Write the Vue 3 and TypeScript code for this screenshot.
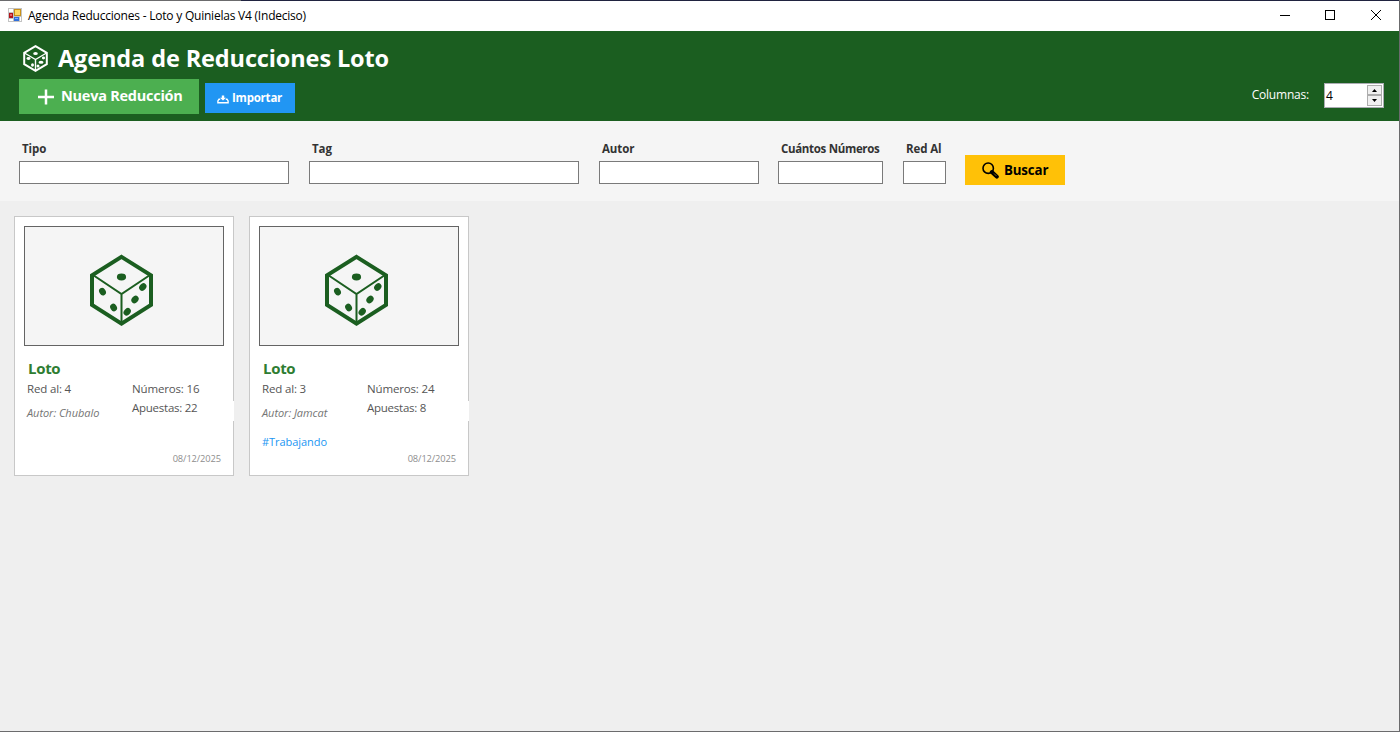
<script setup lang="ts">
import { ref } from 'vue'

interface Reduction {
  type: string
  redAl: number
  numbers: number
  bets: number
  author: string
  tag: string
  date: string
}

interface Field {
  key: string
  label: string
}

const columns = ref(4)
const fields: Field[] = [
  { key: 'tipo', label: 'Tipo' },
  { key: 'etiqueta', label: 'Tag' },
  { key: 'autor', label: 'Autor' },
  { key: 'numeros', label: 'Cuántos Números' },
  { key: 'redal', label: 'Red Al' },
]
const reductions: Reduction[] = [
  { type: 'Loto', redAl: 4, numbers: 16, bets: 22, author: 'Chubalo', tag: '', date: '08/12/2025' },
  { type: 'Loto', redAl: 3, numbers: 24, bets: 8, author: 'Jamcat', tag: '#Trabajando', date: '08/12/2025' },
]
</script>

<template>
  <div class="window">
    <div class="top-edge"></div>
    <div class="titlebar">
      <svg class="app-icon" viewBox="0 0 14 14" shape-rendering="crispEdges">
        <rect width="14" height="14" fill="#c3c3c3" />
        <path d="M1 1h4v3H1zM1 11h4v2H1z" fill="#fff" />
        <rect x="1" y="5" width="4" height="5" fill="#b3141b" />
        <rect x="2" y="6" width="2" height="2" fill="#e8656a" />
        <rect x="6" y="1" width="7" height="7" fill="#c9911a" />
        <rect x="7" y="2" width="5" height="5" fill="#ffd862" />
        <rect x="6" y="9" width="5" height="4" fill="#2f6fdc" />
        <rect x="7" y="10" width="3" height="1" fill="#7fb0ff" />
        <rect x="12" y="9" width="1" height="4" fill="#fff" />
      </svg>
      <span class="caption">Agenda Reducciones - Loto y Quinielas V4 (Indeciso)</span>
      <svg class="controls" viewBox="0 0 102 10" shape-rendering="crispEdges">
        <path d="M0 5.500h10" stroke="#000" />
        <rect x="45.500" y=".5" width="9" height="9" fill="none" stroke="#000" />
        <path d="M91 0l10 10M101 0L91 10" stroke="#000" shape-rendering="auto" />
      </svg>
    </div>

    <header class="header">
      <div class="brand">
        <svg class="brand-die" viewBox="0 0 25 27" fill="none" stroke="#fff">
          <path d="M12.500 1.200 23.800 7.800V19.200L12.500 25.800 1.200 19.200V7.800Z" stroke-width="2" />
          <path d="M1.500 8 12.500 14.500 23.500 8M12.500 14.500V25.500" stroke-width="1.400" />
          <g fill="#fff" stroke="none">
            <ellipse cx="12.500" cy="8.500" rx="2.300" ry="1.600" />
            <ellipse cx="5.500" cy="13.500" rx="2" ry="1.400" />
            <ellipse cx="9.500" cy="20" rx="1.500" ry="1.700" />
            <ellipse cx="20.500" cy="13" rx="1.600" ry="1.400" />
            <ellipse cx="18" cy="17.200" rx="2.500" ry="1.500" />
            <ellipse cx="15" cy="21" rx="1.500" ry="1.500" />
          </g>
        </svg>
        <h1>Agenda de Reducciones Loto</h1>
      </div>
      <div class="toolbar">
        <button class="btn new">
          <svg class="plus" viewBox="0 0 16 16"><path d="M8 .5v15M0 8h16" stroke="#fff" stroke-width="2.500" /></svg>
          <span class="new-text">Nueva Reducción</span>
        </button>
        <button class="btn import">
          <svg class="import-icon" viewBox="0 0 12 9" fill="none" stroke="#fff">
            <path d="M3.200 4.200H2L.9 6V7.800H11.100V6L10 4.200H8.800" stroke-width="1.400" />
            <path d="M4.800 .5H7.200V2.800H9L6 5.600 3 2.800H4.800Z" fill="#fff" stroke="none" />
          </svg>
          <span class="import-text">Importar</span>
        </button>
        <div class="columns">
          <span class="columns-label">Columnas:</span>
          <div class="spinner">
            <span class="spinner-value">{{ columns }}</span>
            <div class="arrows">
              <button @click="columns++"><svg viewBox="0 0 5 3"><path d="M0 3h5L2.500 0z" /></svg></button>
              <button @click="columns--"><svg viewBox="0 0 5 3"><path d="M0 0h5L2.500 3z" /></svg></button>
            </div>
          </div>
        </div>
      </div>
    </header>

    <section class="filters">
      <label v-for="f in fields" :key="f.key" class="field" :class="f.key">
        <span class="field-label">{{ f.label }}</span>
        <input type="text" />
      </label>
      <button class="btn search">
        <svg class="lens" viewBox="0 0 17 17" fill="none" stroke="#000">
          <circle cx="6.200" cy="6.200" r="5.200" stroke-width="1.600" />
          <path d="M9.800 10 14.800 14.600" stroke-width="4" stroke-linecap="round" />
          <path d="M12 11.500 14.500 14" stroke="#ffc107" stroke-width=".5" />
        </svg>
        <span class="search-text">Buscar</span>
      </button>
    </section>

    <main class="grid">
      <article v-for="r in reductions" :key="r.author" class="card">
        <div class="picture">
          <svg class="die" viewBox="0 0 64 72" fill="none" stroke="#1b5e20">
            <path d="M31.500 2.900 61 21.400V50.900L31.500 69.600 2 50.900V21.400Z" stroke-width="4" />
            <path d="M3 21 31.500 40 60 21M31.500 40V69" stroke-width="2" />
            <g fill="#1b5e20" stroke="none">
              <ellipse cx="31.500" cy="23" rx="4.600" ry="3.400" />
              <ellipse cx="12.500" cy="37.600" rx="3.200" ry="3.900" transform="rotate(-32 12.500 37.600)" />
              <ellipse cx="23.600" cy="53.500" rx="3.200" ry="3.900" transform="rotate(-32 23.600 53.500)" />
              <ellipse cx="52.800" cy="33" rx="3.200" ry="4.100" transform="rotate(42 52.800 33)" />
              <ellipse cx="45" cy="45.500" rx="3.200" ry="4.100" transform="rotate(42 45 45.500)" />
              <ellipse cx="37.200" cy="57.800" rx="3.200" ry="4.100" transform="rotate(42 37.200 57.800)" />
            </g>
          </svg>
        </div>
        <h2>{{ r.type }}</h2>
        <div class="details">
          <div class="left">
            <span class="red-al">Red al: {{ r.redAl }}</span>
            <span class="author">Autor: {{ r.author }}</span>
          </div>
          <div class="right">
            <span class="numbers">Números: {{ r.numbers }}</span>
            <span class="bets">Apuestas: {{ r.bets }}</span>
          </div>
        </div>
        <div class="hashtag">{{ r.tag }}</div>
        <time>{{ r.date }}</time>
      </article>
    </main>
  </div>
</template>

<style>
body {
  margin: 0;
  overflow: hidden;
}
</style>

<style scoped>
.window {
  box-sizing: border-box;
  width: 1400px;
  height: 732px;
  display: flex;
  flex-direction: column;
  border-right: 1px solid #6b6b6d;
  border-bottom: 1px solid #6b6b6d;
  background: #efefef;
  font-family: "Open Sans", "Noto Sans", sans-serif;
  font-size: 12px;
  white-space: nowrap;
}
.window * { box-sizing: border-box; }
svg { display: block; flex: none; }
button { font-family: inherit; border: 0; padding: 0; margin: 0; }
.top-edge { height: 1px; flex: none; background: linear-gradient(to right, #6b6b6d 241px, #202340 241px); }
.titlebar {
  height: 30px;
  flex: none;
  display: flex;
  align-items: center;
  padding: 0 18px 0 8px;
  background: #fff;
}
.app-icon { width: 14px; height: 14px; margin-bottom: 2px; }
.caption { margin-left: 6px; line-height: 20px; color: #000; letter-spacing: -0.22px; }
.controls { width: 102px; height: 10px; margin-left: auto; margin-right: -1px; margin-bottom: 2px; }
.header {
  height: 90px;
  flex: none;
  background: #1b5e20;
  color: #fff;
}
.brand { height: 48px; display: flex; padding: 14px 0 0 23px; }
.brand-die { width: 25px; height: 27px; }
h1 { margin: -3px 0 0 10px; font-size: 23.500px; line-height: 32px; font-weight: 700; letter-spacing: -0.12px; }
.toolbar { display: flex; padding-left: 19px; }
.btn { display: flex; align-items: center; font-weight: 700; color: #fff; }
.new { width: 180px; height: 35px; background: #4caf50; padding-left: 19px; font-size: 14.500px; letter-spacing: -0.25px; }
.new-text, .import-text { margin-bottom: 2px; }
.plus { width: 16px; height: 16px; margin-right: 7px; }
.import { width: 90px; height: 30px; margin: 4px 0 0 6px; background: #2196f3; padding-left: 12px; font-size: 11.500px; letter-spacing: -0.22px; }
.import-text { margin-bottom: 1px; }
.import-icon { width: 12px; height: 9px; margin: 2px 3px 0 0; }
.columns { display: flex; margin: 4px 15px 0 auto; }
.columns-label { line-height: 24px; margin-right: 15px; letter-spacing: -0.2px; }
.spinner {
  width: 60px;
  height: 25px;
  display: flex;
  justify-content: space-between;
  padding: 1px;
  border: 1px solid #abadb3;
  background: #fff;
  color: #000;
}
.spinner-value { line-height: 21px; }
.arrows { width: 15px; display: flex; flex-direction: column; }
.arrows button {
  height: 10px;
  display: flex;
  align-items: center;
  justify-content: center;
  background: #f0f0f0;
  border: 1px solid #adadad;
}
.arrows button + button { height: 11px; }
.arrows svg { width: 5px; height: 3px; }
.filters { height: 80px; flex: none; display: flex; padding-left: 19px; background: #f5f5f5; }
.field { display: flex; flex-direction: column; margin-right: 20px; padding-top: 18px; }
.field-label { height: 22px; line-height: 20px; padding-left: 3px; font-size: 11.500px; font-weight: 700; color: #333; letter-spacing: -0.1px; }
.field input { width: 100%; height: 23px; border: 1px solid #7a7a7a; background: #fff; padding: 0 3px; outline: 0; }
.tipo, .etiqueta { width: 270px; }
.autor { width: 160px; margin-right: 19px; }
.numeros { width: 105px; }
.numeros .field-label { letter-spacing: -0.32px; }
.redal { width: 43px; margin-right: 19px; }
.search { width: 100px; height: 30px; margin-top: 34px; padding-left: 17px; background: #ffc107; color: #000; font-size: 13.300px; letter-spacing: -0.15px; }
.lens { width: 17px; height: 17px; margin-right: 5px; }
.grid { display: flex; gap: 15px; padding: 15px 14px; }
.card {
  width: 220px;
  height: 260px;
  padding: 9px 0 0 9px;
  background: #fff;
  border: 1px solid #c8c8c8;
}
.picture { width: 200px; height: 120px; border: 1px solid #646464; background: #f5f5f5; padding: 27px 0 0 65px; }
.die { width: 64px; height: 72px; }
h2 { margin: 11px 0 0 4px; font-size: 15px; line-height: 22px; font-weight: 700; color: #2e7d32; letter-spacing: -0.3px; }
.details { display: flex; height: 56px; margin-top: 1px; padding-left: 3px; margin-right: -1px; color: #555; }
.left { width: 105px; display: flex; flex-direction: column; }
.right { flex: 1; display: flex; flex-direction: column; }
.red-al, .numbers { line-height: 18px; font-size: 11.500px; letter-spacing: -0.16px; }
.author { margin-top: 6px; line-height: 18px; font-size: 11px; font-style: italic; color: #757575; letter-spacing: -0.05px; }
.bets { margin-top: 3px; height: 20px; line-height: 14px; background: #fff; font-size: 11.500px; letter-spacing: -0.25px; }
.hashtag { height: 12px; line-height: 12px; padding-left: 3px; font-size: 11px; color: #2196f3; letter-spacing: -0.06px; }
time { display: block; margin: 5px 12px 0 0; line-height: 12px; text-align: right; font-size: 9.300px; color: #8e8e8e; letter-spacing: -0.1px; }
</style>
